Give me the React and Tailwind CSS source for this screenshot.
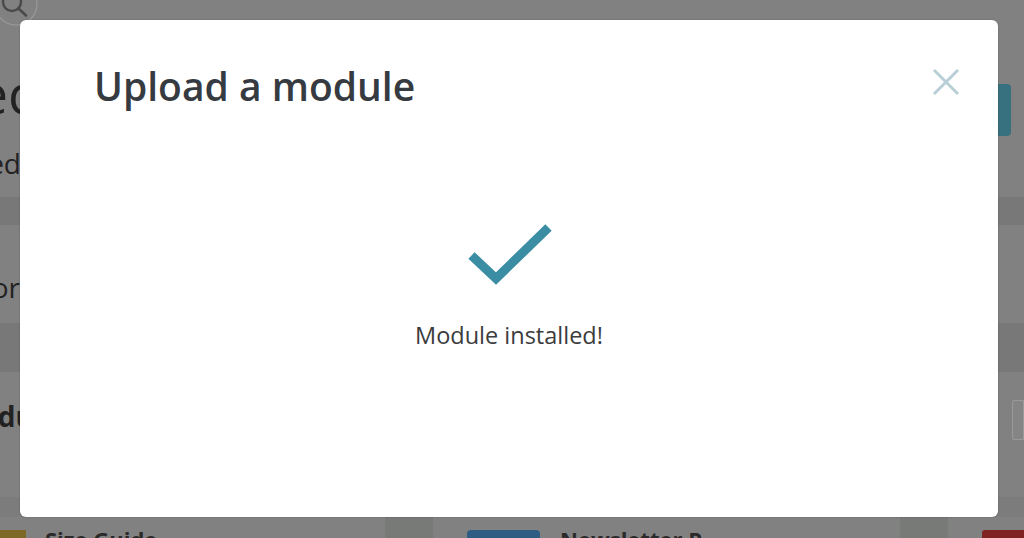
export default function App() {
  return (
    <div className="relative w-[1024px] h-[538px] overflow-hidden bg-[#818181] font-['Open_Sans',sans-serif]">
      {/* dimmed page behind the modal */}
      <div className="flex flex-col h-full">
        <div className="h-[60px] relative">
          <svg width="44" height="34" viewBox="0 0 44 34" className="absolute left-0 top-0">
            <circle cx="16" cy="4" r="21" fill="none" stroke="#9a9a9a" strokeWidth="1.2" />
            <circle cx="12" cy="2" r="9" fill="none" stroke="#4a4a4a" strokeWidth="2.4" />
            <line x1="18.5" y1="8.5" x2="26" y2="15.5" stroke="#4a4a4a" strokeWidth="2.6" strokeLinecap="round" />
          </svg>
        </div>
        <div className="h-[62px] w-[34px] flex justify-end items-end overflow-hidden whitespace-nowrap">
          <span className="text-[54px] leading-none text-[#222] pb-[2px]">Selec</span>
        </div>
        <div className="h-[75px] w-[21px] flex justify-end items-center overflow-hidden whitespace-nowrap">
          <span className="text-[28px] leading-none text-[#222] pt-[6px]">Installed</span>
        </div>
        <div className="h-[28px] bg-[#787878]" />
        <div className="h-[98px] w-[20px] flex justify-end items-end overflow-hidden whitespace-nowrap pb-[22px]">
          <span className="text-[28px] leading-none text-[#222]">Vendor</span>
        </div>
        <div className="h-[49px] bg-[#787878]" />
        <div className="h-[125px] flex justify-between items-start">
          <div className="w-[34px] mt-[30px] flex justify-end overflow-hidden whitespace-nowrap">
            <span className="text-[28px] leading-none font-bold text-[#222]">Produ</span>
          </div>
          <div className="mt-[28px] w-[12px] h-[40px] border border-[#9a9a9a] bg-[#858585] rounded-l-[2px]" />
        </div>
        <div className="h-[20px] bg-[#7c7c7c]" />
        <div className="flex-1 flex items-end">
          <div className="w-full h-[21px] flex relative">
            <div className="w-[26px] h-[8px] mt-[13px] bg-[#7d6828]" />
            <div className="ml-[19px] mt-[11px] text-[22px] leading-none font-bold text-[#2a2a2a] w-[340px] whitespace-nowrap">Size Guide</div>
            <div className="w-[48px] h-full bg-[#777a77]" />
            <div className="ml-[34px] w-[73px] h-[8px] mt-[13px] rounded-t-[4px] bg-[#2e5c82]" />
            <div className="ml-[20px] mt-[11px] text-[22px] leading-none font-bold text-[#2a2a2a] w-[340px] whitespace-nowrap">Newsletter P</div>
            <div className="w-[48px] h-full bg-[#777a77]" />
            <div className="ml-[34px] flex-1 h-[8px] mt-[13px] rounded-tl-[3px] bg-[#7e2222]" />
          </div>
        </div>
      </div>
      <div className="absolute right-[13px] top-[84px] w-[16px] h-[52px] rounded-[4px] bg-[#37707e]" />

      {/* modal */}
      <div className="absolute left-[20px] top-[20px] w-[978px] h-[497px] bg-white rounded-[6px] shadow-[0_0_2px_rgba(0,0,0,0.25)]">
        <div className="flex justify-between items-start pt-[46px] pl-[74px] pr-[38px]">
          <h1 className="text-[39px] leading-none font-semibold text-[#363a41]">Upload a module</h1>
          <svg width="28" height="28" viewBox="0 0 28 28" className="mt-[2px]">
            <line x1="2" y1="2" x2="26" y2="26" stroke="#b9cfd8" strokeWidth="3" />
            <line x1="26" y1="2" x2="2" y2="26" stroke="#b9cfd8" strokeWidth="3" />
          </svg>
        </div>
        <div className="flex flex-col items-center">
          <svg width="92" height="70" viewBox="0 0 92 70" className="mt-[115px]">
            <polyline points="8.5,35.5 33,58.5 85.5,7.5" fill="none" stroke="#3a8da3" strokeWidth="9" strokeLinejoin="miter" strokeLinecap="butt" />
          </svg>
          <p className="mt-[34px] text-[23.5px] leading-none text-[#3c3c3c]">Module installed!</p>
        </div>
      </div>
    </div>
  );
}
